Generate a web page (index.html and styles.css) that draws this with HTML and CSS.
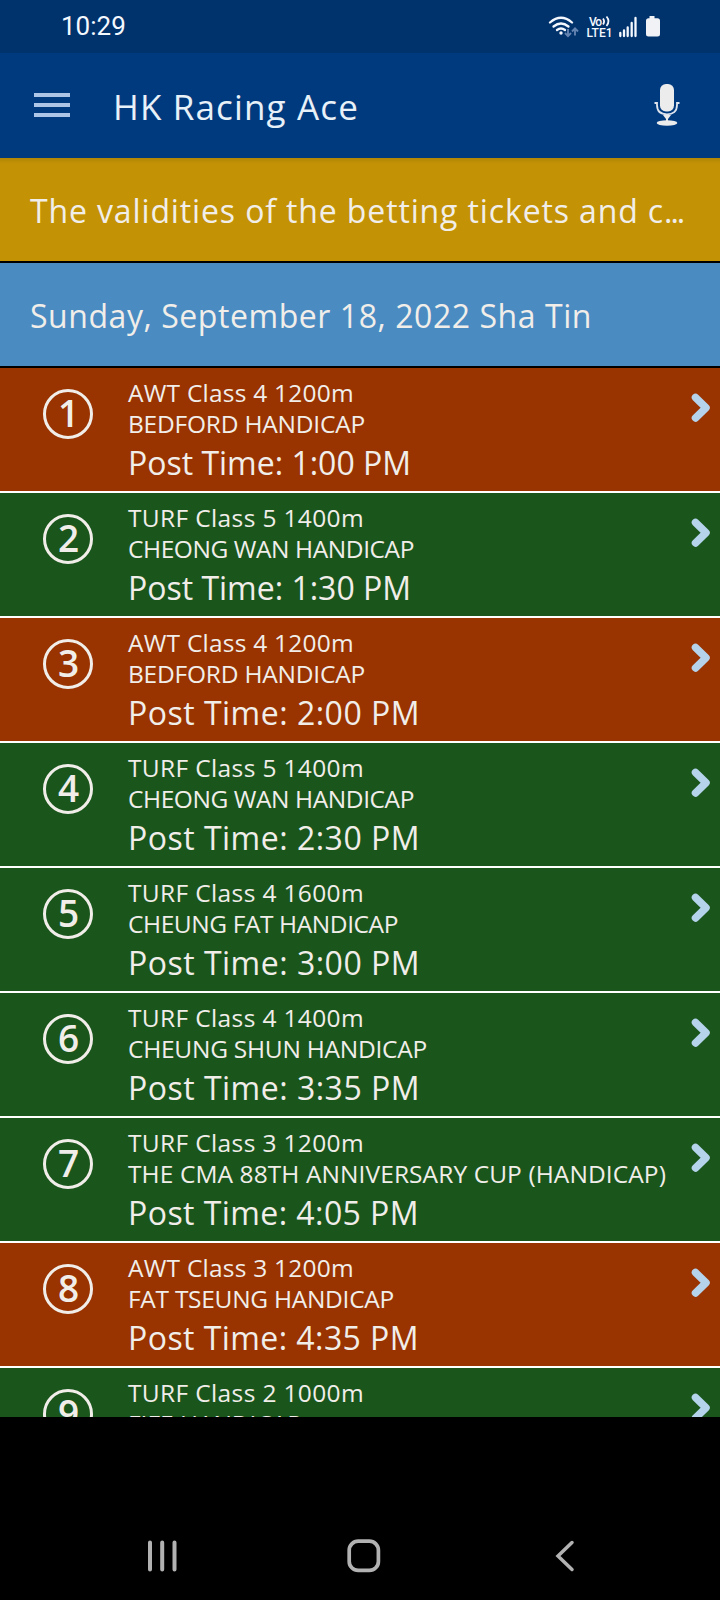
FILE: index.html
```
<!DOCTYPE html>
<html lang="en">
<head>
  <meta charset="UTF-8">
  <meta name="viewport" content="width=device-width, initial-scale=1.0">
  <title>HK Racing Ace</title>
  <link rel="stylesheet" href="styles.css">
</head>
<body>
  <div class="status-bar">
    <span class="clock">10:29</span>
    <svg class="status-icons" width="114" height="24" viewBox="0 0 114 24">
      <!-- wifi -->
      <g fill="none" stroke="#f4f8ff" stroke-width="2.3" stroke-linecap="round">
        <path d="M2 7.500Q13 -2 24 7.500"/>
        <path d="M5.500 11.500Q13 5.500 20.500 11.500"/>
        <path d="M9 15Q13 12 17 15"/>
      </g>
      <circle cx="13" cy="18" r="1.700" fill="#f4f8ff"/>
      <g fill="none" stroke="#6383b0" stroke-width="1.900">
        <path d="M20 14v7M17 18l3 3.200 3-3.200M27 20.500v-7M24 16.500l3-3.200 3 3.200"/>
      </g>
      <!-- volte -->
      <text class="volte" x="41" y="10.500" textLength="13">Vo</text>
      <path d="M55 3.500q2.200 2.800 0 6M58.500 1.500q4 4.800 0 9.500" fill="none" stroke="#f4f8ff" stroke-width="1.800"/>
      <text class="volte" x="38.500" y="21.500" textLength="26">LTE1</text>
      <!-- signal -->
      <path d="M72.300 21v-3M76 21v-5.500M79.700 21v-8.500M83.700 21v-13M87.500 21V3" stroke="#f4f8ff" stroke-width="2.300" stroke-linecap="round"/>
      <!-- battery -->
      <path d="M101.500 1h5v2.300h3q2.500 0 2.500 2.500V19q0 2.500-2.500 2.500h-9Q98 21.500 98 19V5.800q0-2.500 2.500-2.500h1z" fill="#f0f2f6"/>
    </svg>
  </div>

  <header class="app-bar">
    <div class="menu"><i></i><i></i><i></i></div>
    <h1><span class="fit" data-width="246">HK Racing Ace</span></h1>
    <svg class="mic" width="26" height="42" viewBox="0 0 26 42">
      <rect x="6" y="0" width="14" height="27.500" rx="6" fill="#ececec"/>
      <path d="M0.500 19H3v2c0 6.500 4 9.300 10 9.300s10-2.800 10-9.300v-2h2.500" fill="none" stroke="#dfe5ee" stroke-width="1.800"/>
      <path d="M9 31h8l-3 4v3h-2v-3z" fill="#ececec"/>
      <ellipse cx="13" cy="39" rx="10.300" ry="2.700" fill="#ececec"/>
    </svg>
  </header>

  <main class="content">
    <div class="banner notice"><span class="fit" data-width="634">The validities of the betting tickets and c</span><span class="dots">...</span></div>
    <div class="banner meeting"><span class="fit" data-width="562">Sunday, September 18, 2022 Sha Tin</span></div>
    <ul class="races" id="races"></ul>
  </main>

  <nav class="nav-bar">
    <svg width="30" height="32" viewBox="0 0 30 32">
      <path d="M3 2.500v27M15.200 2.500v27M27.500 2.500v27" stroke="#b2b2b2" stroke-width="4" stroke-linecap="round"/>
    </svg>
    <svg class="home" width="34" height="34" viewBox="0 0 34 34">
      <rect x="2.200" y="2.200" width="29.200" height="29.200" rx="9" fill="none" stroke="#b2b2b2" stroke-width="3.700"/>
    </svg>
    <svg width="20" height="32" viewBox="0 0 20 32">
      <path d="M17 2.500L3 16l14 13.500" fill="none" stroke="#b2b2b2" stroke-width="3.500" stroke-linecap="round"/>
    </svg>
  </nav>

  <script>
    // track, race class, name, post time, then drawn width of each line
    const races = [
      ["AWT", "Class 4 1200m", "BEDFORD HANDICAP", "1:00 PM", 226, 237, 283],
      ["TURF", "Class 5 1400m", "CHEONG WAN HANDICAP", "1:30 PM", 236, 286, 283],
      ["AWT", "Class 4 1200m", "BEDFORD HANDICAP", "2:00 PM", 226, 237, 292],
      ["TURF", "Class 5 1400m", "CHEONG WAN HANDICAP", "2:30 PM", 236, 286, 292],
      ["TURF", "Class 4 1600m", "CHEUNG FAT HANDICAP", "3:00 PM", 236, 270, 292],
      ["TURF", "Class 4 1400m", "CHEUNG SHUN HANDICAP", "3:35 PM", 236, 299, 292],
      ["TURF", "Class 3 1200m", "THE CMA 88TH ANNIVERSARY CUP (HANDICAP)", "4:05 PM", 236, 538, 291],
      ["AWT", "Class 3 1200m", "FAT TSEUNG HANDICAP", "4:35 PM", 226, 266, 291],
      ["TURF", "Class 2 1000m", "FIFE HANDICAP", "5:05 PM", 236, 174, 291]
    ];

    const list = document.getElementById("races");

    races.forEach((race, i) => {
      const li = document.createElement("li");
      li.className = "race " + race[0].toLowerCase();
      li.innerHTML = `
        <div class="number">${i + 1}</div>
        <div class="info">
          <div class="line fit" data-width="${race[4]}">${race[0]} ${race[1]}</div>
          <div class="line fit" data-width="${race[5]}">${race[2]}</div>
          <div class="line post fit" data-width="${race[6]}">Post Time: ${race[3]}</div>
        </div>
        <svg class="arrow" width="20" height="30" viewBox="0 0 20 30">
          <path d="M4.500 4.500L15 14.800 4.500 25"/>
        </svg>`;
      list.appendChild(li);
    });

    // spread the letters so every line takes its own width
    document.querySelectorAll(".fit").forEach((line) => {
      const extra = line.dataset.width - line.getBoundingClientRect().width;
      line.style.letterSpacing = extra / line.textContent.length + "px";
    });
  </script>
</body>
</html>
```

FILE: styles.css
```
* {
  box-sizing: border-box;
}

body {
  margin: 0;
  height: 1600px;
  display: flex;
  flex-direction: column;
  background: #000;
  color: #f1eeea;
  font-family: "Open Sans", "Noto Sans", sans-serif;
  overflow: hidden;
}

.status-bar {
  height: 53px;
  padding: 0 58px 0 61px;
  display: flex;
  align-items: center;
  justify-content: space-between;
  background: #00326c;
}

.clock {
  font-family: Roboto, sans-serif;
  font-size: 26px;
  line-height: 53px;
  color: #f4f8ff;
}

.volte {
  font: 500 12px Roboto, sans-serif;
  fill: #f4f8ff;
}

.app-bar {
  height: 105px;
  padding: 0 40px 1px 34px;
  display: flex;
  align-items: center;
  background: #003a7e;
  color: #e8f0f8;
}

.menu {
  width: 36px;
  display: flex;
  flex-direction: column;
  gap: 6px;
}

.menu i {
  height: 4px;
  background: #adc6e8;
}

.app-bar h1 {
  flex: 1;
  margin: 2px 0 0 43px;
  font-size: 35px;
  font-weight: 400;
}

.content {
  height: 1259px;
  overflow: hidden;
}

.banner {
  height: 105px;
  padding: 1px 30px 0;
  display: flex;
  align-items: center;
  border-bottom: 2px solid #000;
  font-size: 32px;
  white-space: nowrap;
}

.notice {
  background: linear-gradient(#b18706, #c49205 6px);
}

.dots {
  letter-spacing: -2px;
}

.meeting {
  background: #4a8bc2;
}

.races {
  margin: 0;
  padding: 0;
  list-style: none;
}

.race {
  height: 125px;
  padding: 9px 9px 0 43px;
  display: flex;
  border-bottom: 2px solid #fff;
}

.awt {
  background: #993300;
}

.turf {
  background: #1a551c;
}

.number {
  width: 50px;
  height: 50px;
  margin-top: 12px;
  padding-left: 1px;
  border: 3px solid;
  border-radius: 50%;
  font-size: 37px;
  font-weight: 600;
  line-height: 42px;
  text-align: center;
}

.info {
  flex: 1;
  padding-left: 35px;
}

.line {
  width: max-content;
  font-size: 24.5px;
  line-height: 31px;
  white-space: nowrap;
}

.post {
  font-size: 32px;
  line-height: 48px;
}

.arrow {
  margin-top: 16px;
}

.arrow path {
  fill: none;
  stroke: #b5d3eb;
  stroke-width: 7.5;
  stroke-linecap: round;
  stroke-linejoin: round;
}

.nav-bar {
  height: 86px;
  margin-top: 96px;
  padding: 0 145px 0 147px;
  display: flex;
  align-items: center;
  justify-content: space-between;
}

.home {
  margin-right: 5px;
}
```
